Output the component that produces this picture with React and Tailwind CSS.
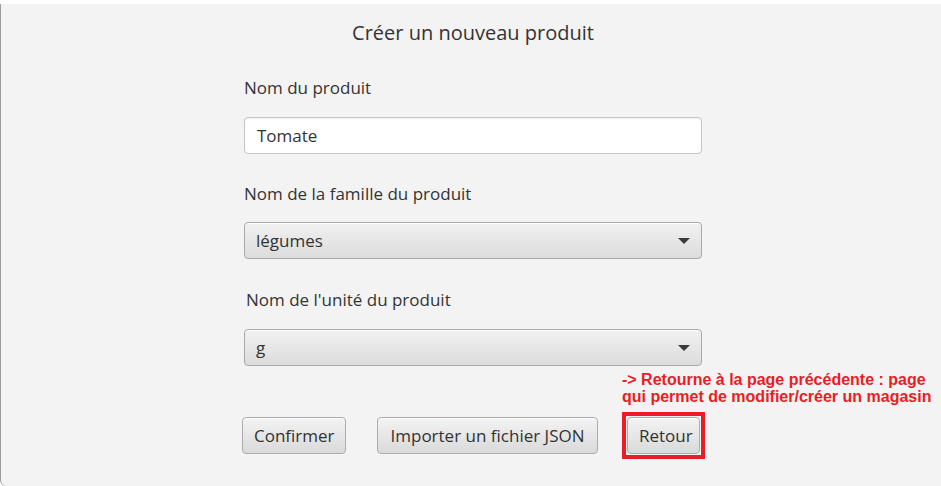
import React from 'react';

function Field({ label, className = '', labelClass = '', children }) {
  return (
    <div className={className}>
      <div className={`text-[17px] leading-[24px] text-[#333333] ${labelClass}`}>{label}</div>
      {children}
    </div>
  );
}

function Select({ value, className = '' }) {
  return (
    <div className={`flex h-[37px] items-center justify-between rounded-[4px] border border-[#a9a9a9] bg-gradient-to-b from-[#f1f1f1] to-[#dcdcdc] pl-[11px] pr-[11px] text-[17px] text-[#333333] shadow-[inset_0_1px_0_#ffffff] ${className}`}>
      <span>{value}</span>
      <svg width="12" height="6" viewBox="0 0 12 6">
        <path d="M0 0 L12 0 L6 6 Z" fill="#3a3a3a" />
      </svg>
    </div>
  );
}

function Button({ children, className = '' }) {
  return (
    <button className={`h-[37px] rounded-[4px] border border-[#acacac] bg-gradient-to-b from-[#f3f3f3] to-[#dadada] px-[11px] text-[17px] text-[#333333] shadow-[inset_0_1px_0_#ffffff] ${className}`}>
      {children}
    </button>
  );
}

export default function App() {
  return (
    <div className="h-[486px] bg-white pt-[4px] font-['Open_Sans',sans-serif]">
      <div className="relative h-[482px] rounded-bl-[6px] border-l border-[#9c9c9c] bg-[#f3f3f3]">
        <div className="ml-[243px] w-[458px] pt-[14px]">
          <h1 className="text-center text-[20px] leading-[30px] text-[#333333]">Créer un nouveau produit</h1>

          <Field label="Nom du produit" className="mt-[28px]">
            <div className="mt-[17px] flex h-[37px] items-center rounded-[4px] border border-[#c6c6c6] bg-white pl-[12px] text-[17px] text-[#333333] shadow-[inset_0_1px_2px_rgba(0,0,0,0.06)]">
              Tomate
            </div>
          </Field>

          <Field label="Nom de la famille du produit" className="mt-[28px]">
            <Select value="légumes" className="mt-[16px]" />
          </Field>

          <Field label="Nom de l'unité du produit" className="mt-[29px]" labelClass="pl-[2px]">
            <Select value="g" className="mt-[17px]" />
          </Field>
        </div>

        <div className="absolute left-[621px] top-[367px] font-['Liberation_Sans',Arial,sans-serif] text-[16px] font-bold leading-[17px] text-[#ed1c24]">
          <div>-&gt; Retourne à la page précédente : page</div>
          <div>qui permet de modifier/créer un magasin</div>
        </div>

        <div className="ml-[241px] mt-[46px] flex items-center">
          <Button className="w-[104px]">Confirmer</Button>
          <Button className="ml-[31px] w-[221px]">Importer un fichier JSON</Button>
          <div className="ml-[24px] border-4 border-[#ed1c24] p-[1px]">
            <Button className="w-[73px] px-0">Retour</Button>
          </div>
        </div>
      </div>
    </div>
  );
}
